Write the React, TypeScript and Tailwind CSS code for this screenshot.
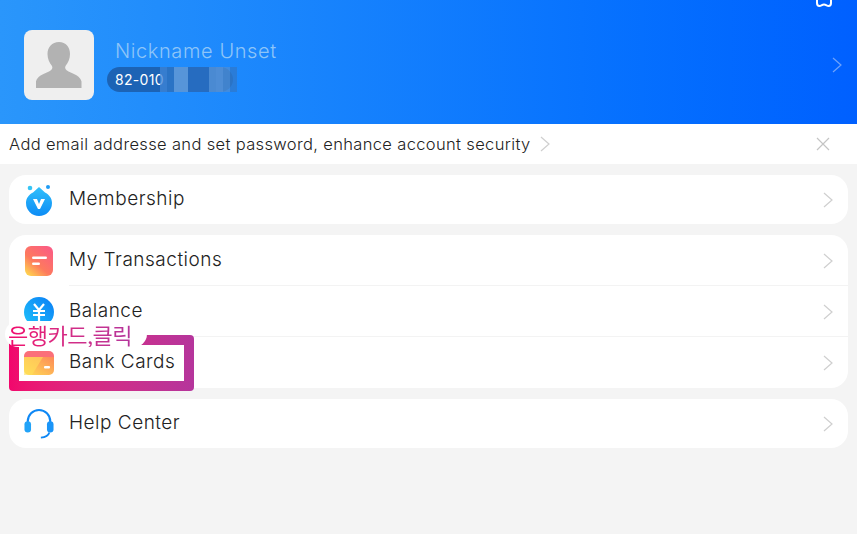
import React from "react";

const Chevron = ({ className = "" }: { className?: string }) => (
  <svg width="10" height="16" viewBox="0 0 10 16" fill="none" className={className}>
    <path d="M1 1l8 7-8 7" stroke="currentColor" strokeWidth="1.2" />
  </svg>
);

const MemberIcon = () => (
  <svg width="28" height="32" viewBox="0 0 28 32">
    <defs>
      <linearGradient id="m" x1="0" y1="0" x2="0" y2="1">
        <stop offset="0" stopColor="#31c0fb" />
        <stop offset="1" stopColor="#0d8cf5" />
      </linearGradient>
    </defs>
    <circle cx="5" cy="4" r="2.3" fill="#37c5f5" />
    <circle cx="23" cy="3" r="2" fill="#1f9cf5" />
    <path d="M14 3l6 5.5c4 2 7 5.500 7 10.500a13 13 0 0 1-26 0c0-5 3-8.500 7-10.500z" fill="url(#m)" />
    <path d="M8 15h4l2 5 2-5h4l-5 10h-2z" fill="#fff" />
  </svg>
);

const TxIcon = () => (
  <svg width="28" height="30" viewBox="0 0 28 30">
    <defs>
      <linearGradient id="t" x1="0.9" y1="0" x2="0.1" y2="1">
        <stop offset="0" stopColor="#fb5a86" />
        <stop offset="0.6" stopColor="#fd7a5e" />
        <stop offset="1" stopColor="#ffd84e" />
      </linearGradient>
    </defs>
    <rect width="28" height="30" rx="6" fill="url(#t)" />
    <rect x="7" y="10.500" width="15" height="2.500" rx="1.200" fill="#fff" />
    <rect x="7" y="16.500" width="8" height="2.500" rx="1.200" fill="#fff" />
  </svg>
);

const BalanceIcon = () => (
  <svg width="30" height="30" viewBox="0 0 30 30">
    <defs>
      <linearGradient id="b" x1="0" y1="1" x2="1" y2="0">
        <stop offset="0" stopColor="#1fc4fb" />
        <stop offset="1" stopColor="#0a7df5" />
      </linearGradient>
    </defs>
    <circle cx="15" cy="15" r="15" fill="url(#b)" />
    <path d="M10 7l5 6 5-6M9 14h12M9 18h12M15 13v11" fill="none" stroke="#fff" strokeWidth="2.200" />
  </svg>
);

const CardIcon = () => (
  <svg width="30" height="24" viewBox="0 0 30 24">
    <defs>
      <linearGradient id="c" x1="0" y1="1" x2="1" y2="0">
        <stop offset="0" stopColor="#ffdf55" />
        <stop offset="1" stopColor="#fd8a58" />
      </linearGradient>
    </defs>
    <path d="M5 0h20a5 5 0 0 1 5 5v1H0V5a5 5 0 0 1 5-5z" fill="#fb6f79" />
    <path d="M0 6h30v13a5 5 0 0 1-5 5H5a5 5 0 0 1-5-5z" fill="url(#c)" />
    <path d="M0 24V6h19L8 24z" fill="#ffe05a" opacity="0.6" />
    <rect x="20" y="15" width="6" height="2.500" rx="1" fill="#fff" />
  </svg>
);

const HelpIcon = () => (
  <svg width="32" height="32" viewBox="0 0 32 32" fill="none">
    <path d="M4 15v-2a12 12 0 0 1 24 0v2" stroke="#0f88f5" strokeWidth="2.200" />
    <rect x="0.500" y="13" width="7" height="12" rx="3.500" fill="#22a3f8" />
    <rect x="24.500" y="13" width="7" height="12" rx="3.500" fill="#1b95f8" />
    <path d="M27 25c-1 3.500-4 5-9 5.500" stroke="#0f88f5" strokeWidth="2" />
  </svg>
);

const Row = ({ icon, label, divider = false }: { icon: React.ReactNode; label: string; divider?: boolean }) => (
  <div className="relative flex h-[51px] items-center pl-[15px] pr-[15px]">
    <div className="flex w-[30px] shrink-0 justify-center">{icon}</div>
    <div className={`absolute bottom-0 left-[60px] right-0 h-px ${divider ? "bg-[#f3f3f3]" : ""}`} />
    <span className="relative z-10 ml-[15px] flex-1 text-[19px] font-light tracking-[0.5px] text-[#222]">{label}</span>
    <Chevron className="relative z-10 text-[#cfcfcf]" />
  </div>
);

const blocks = ["#3f86d8", "#2f78cb", "#6ba6e6", "#6ba6e6", "#2a6fc4", "#2a6fc4", "#2a6fc4", "#5a97dc", "#5f9be0", "#4d8dd6", "#2f78cb"];

export default function App() {
  return (
    <div className="relative h-[534px] w-[857px] overflow-hidden bg-[#f4f4f4] font-['Inter',sans-serif]">
      <header className="relative flex h-[124px] items-center bg-gradient-to-r from-[#2a96fb] to-[#0060ff] pl-6 pr-[15px] pt-[6px]">
        <svg width="18" height="8" viewBox="0 0 18 8" className="absolute right-[24px] top-0" fill="none">
          <path d="M2 0v3c0 2 1 3 2.500 3S7 4.500 9 4.500 12 6 13.500 6 16 5 16 3V0" stroke="#fff" strokeWidth="2" />
        </svg>
        <div className="flex h-[70px] w-[70px] shrink-0 items-center justify-center rounded-[8px] bg-[#efefef]">
          <svg width="48" height="48" viewBox="0 0 48 48">
            <path d="M24 1c7 0 11 5 11 12 0 5-2 9-4.500 12-1 2 0 4 3 5.500 6 2.500 12 5 13 10v6.500H1V40.500c1-5 7-7.500 13-10 3-1.500 4-3.500 3-5.500-2.500-3-4.500-7-4.500-12C12.500 6 17 1 24 1z" fill="#b2b2b2" />
          </svg>
        </div>
        <div className="ml-[13px] flex flex-1 flex-col items-start">
          <div className="ml-[8px] text-[20px] font-light leading-[26px] tracking-[0.6px] text-[#8ec5f8]">Nickname Unset</div>
          <div className="relative mt-[3px] flex h-[25px] w-[126px] items-center rounded-full bg-[#1c63b5] pl-[8px] text-[14px] tracking-[0.3px] text-white">
            82-010
            <div className="absolute left-[53px] top-0 flex h-[25px]">
              {blocks.map((c, i) => (
                <div key={i} className="h-full w-[7px]" style={{ backgroundColor: c, opacity: 0.75 }} />
              ))}
            </div>
          </div>
        </div>
        <Chevron className="text-[#6ea3fb]" />
      </header>

      <div className="flex h-[40px] items-center bg-white pl-[9px] pr-[27px]">
        <span className="text-[16.500px] font-light tracking-[0.35px] text-[#222]">Add email addresse and set password, enhance account security</span>
        <Chevron className="ml-[9px] text-[#cfcfcf]" />
        <svg width="14" height="14" viewBox="0 0 14 14" className="ml-auto" fill="none">
          <path d="M1 1l12 12M13 1L1 13" stroke="#c4c4c4" strokeWidth="1.200" />
        </svg>
      </div>

      <main className="flex flex-col gap-[11px] px-[9px] pt-[11px]">
        <section className="overflow-hidden rounded-[17px] bg-white [&>div]:h-[49px]">
          <Row icon={<MemberIcon />} label="Membership" />
        </section>
        <section className="relative rounded-[17px] bg-white">
          <Row icon={<TxIcon />} label="My Transactions" divider />
          <Row icon={<BalanceIcon />} label="Balance" divider />
          <div className="absolute left-0 top-[100px] flex h-[56px] w-[185px] rounded-[4px] bg-gradient-to-r from-[#f2066c] to-[#b5359c] p-[10px]">
            <div className="flex-1 bg-white" />
          </div>
          <Row icon={<CardIcon />} label="Bank Cards" />
          <div className="absolute left-[-4px] top-[86px] z-20 flex h-[26px] w-[142px] items-center rounded-full bg-white pl-[3px]">
            <span className="bg-gradient-to-r from-[#f2066c] to-[#b5359c] bg-clip-text font-['Noto_Sans_CJK_KR',sans-serif] text-[22px] leading-[26px] tracking-[-0.5px] text-transparent">은행카드,클릭</span>
          </div>
        </section>
        <section className="overflow-hidden rounded-[17px] bg-white [&>div]:h-[49px]">
          <Row icon={<HelpIcon />} label="Help Center" />
        </section>
      </main>
    </div>
  );
}
